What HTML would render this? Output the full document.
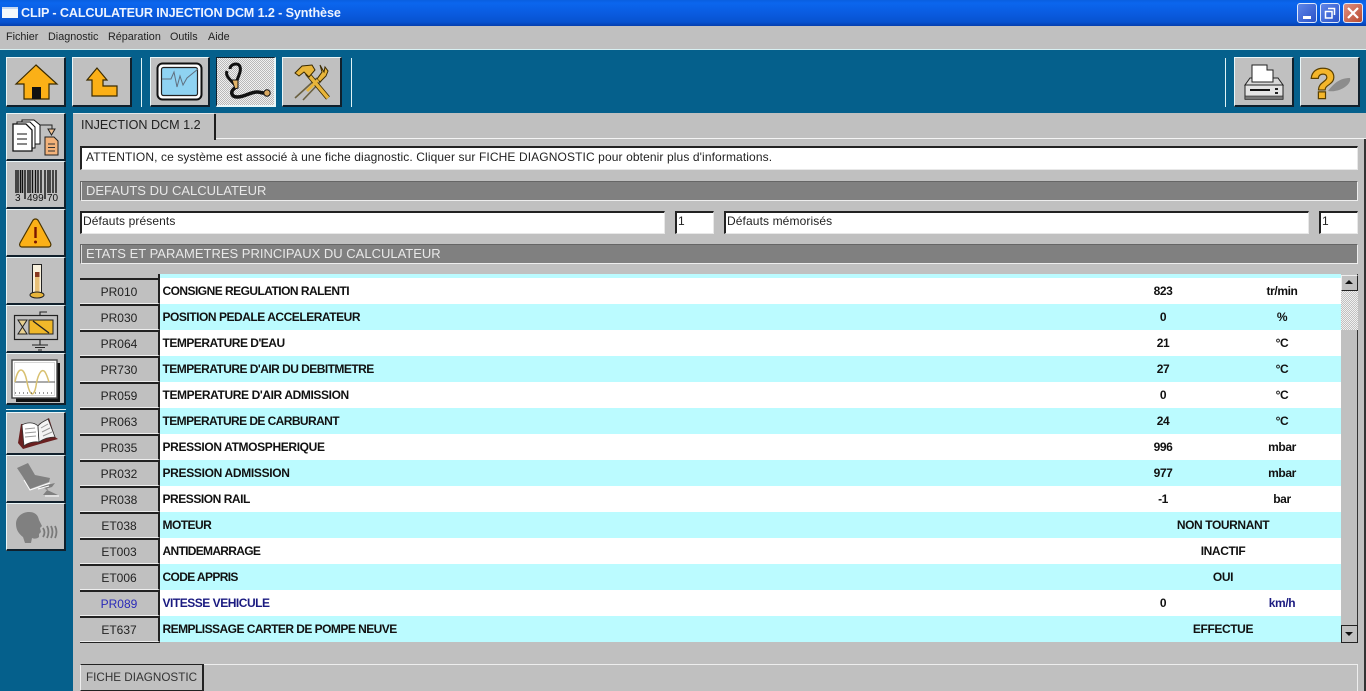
<!DOCTYPE html>
<html><head><meta charset="utf-8"><title>CLIP</title>
<style>
html,body{margin:0;padding:0;background:#05608c;overflow:hidden;width:1366px;height:691px;}
body{position:relative;font-family:"Liberation Sans",Arial,sans-serif;font-size:12px;color:#222;}
.a{position:absolute;box-sizing:border-box;}
.t{position:absolute;white-space:nowrap;}
.btn{position:absolute;box-sizing:border-box;background:#c0c0c0;border-top:1px solid #eaf6f8;border-left:1px solid #eaf6f8;border-right:2px solid #10202c;border-bottom:2px solid #10202c;}
.btn svg{position:absolute;left:0;top:0;}
.sep{position:absolute;width:1px;background:#dff3f5;top:58px;height:49px;}
.hdr{position:absolute;left:80px;width:1278px;height:20px;background:#808080;border:1px solid #666;border-right-color:#eee;border-bottom-color:#eee;box-sizing:border-box;color:#e8e8e8;font-size:13px;line-height:17px;padding-left:5px;box-shadow:inset 1px 0 0 #ddd;white-space:nowrap;}
.fld{position:absolute;background:#fff;box-sizing:border-box;border-top:2px solid #222;border-left:2px solid #222;border-right:1px solid #e8e8e8;border-bottom:1px solid #e8e8e8;height:23px;line-height:17px;font-size:12px;padding-left:1px;color:#222;letter-spacing:.11px;white-space:nowrap;}
.row{position:absolute;left:80px;width:1261px;height:26px;}
.row.c{background:#bbfbff;}.row.w{background:#fff;}
.code{position:absolute;left:0;top:0;width:80px;height:26px;background:#c0c0c0;box-sizing:border-box;border-top:2px solid #222;border-right:2px solid #222;border-bottom:1px solid #eee;text-align:center;line-height:25px;font-size:12px;color:#222;}
.name{position:absolute;left:82.5px;top:0;line-height:26px;font-weight:bold;font-size:12px;letter-spacing:-.54px;color:#111;white-space:nowrap;}
.val{position:absolute;top:0;line-height:26px;font-weight:bold;font-size:12px;letter-spacing:-.4px;text-align:center;color:#111;white-space:nowrap;}
.v1{left:1043px;width:80px;}.v2{left:1162px;width:80px;}.v3{left:1063px;width:160px;}
.blue .code,.blue .name,.blue .val{color:#1a1a80;}
.blue .code{color:#2a2ab8;}
.wb{position:absolute;top:3px;width:20px;height:20px;border-radius:3px;border:1px solid #dfe9fb;box-sizing:border-box;background:linear-gradient(135deg,#5f86e8,#2a52c8);}
</style></head><body>

<!-- Title bar -->
<div class="a" style="left:0;top:0;width:1366px;height:26px;background:linear-gradient(180deg,#0a5fe0 0,#0b66ee 12%,#0a5ce0 50%,#0752d0 85%,#063fae 100%);"></div>
<div class="a" style="left:2px;top:7px;width:16px;height:11px;background:#f4f8fc;border-top:2px solid #c8d8f0;"></div>
<div class="t" style="left:21px;top:5px;font-size:12.6px;font-weight:bold;color:#eef4ff;line-height:16px;letter-spacing:-.11px;">CLIP - CALCULATEUR INJECTION DCM 1.2 - Synthèse</div>
<div class="wb" style="left:1297px;"><div class="a" style="left:5px;top:12px;width:8px;height:3px;background:#fff;"></div></div>
<div class="wb" style="left:1320px;"><svg width="18" height="18" style="position:absolute;left:0;top:0"><path d="M7 4.500h6.500v6.500M4.500 7.500h6.500v6.500h-6.500z" fill="none" stroke="#fff" stroke-width="1.500"/></svg></div>
<div class="wb" style="left:1343px;background:linear-gradient(135deg,#e09080,#b84a30);"><svg width="18" height="18" style="position:absolute;left:0;top:0"><path d="M4 4l10 10M14 4L4 14" stroke="#fff" stroke-width="2.200"/></svg></div>

<!-- Menu bar -->
<div class="a" style="left:0;top:26px;width:1366px;height:24px;background:#c0c0c0;"></div>
<div class="a" style="left:0;top:49px;width:1366px;height:1px;background:#d8f0f2;"></div>
<div class="t" style="left:6px;top:30px;font-size:10.8px;line-height:14px;">Fichier</div>
<div class="t" style="left:48px;top:30px;font-size:10.8px;line-height:14px;">Diagnostic</div>
<div class="t" style="left:108px;top:30px;font-size:10.8px;line-height:14px;">Réparation</div>
<div class="t" style="left:170px;top:30px;font-size:10.8px;line-height:14px;">Outils</div>
<div class="t" style="left:208px;top:30px;font-size:10.8px;line-height:14px;">Aide</div>

<!-- Toolbar -->
<div class="btn" style="left:6px;top:57px;width:60px;height:50px;">
<svg width="58" height="48"><path d="M29 7L9 26H17V41H42V26H50z" fill="#fbb017" stroke="#3a2a00" stroke-width="1.200"/><rect x="25" y="29" width="9" height="12" fill="#111"/></svg></div>
<div class="btn" style="left:72px;top:57px;width:60px;height:50px;">
<svg width="58" height="48"><path d="M24 10L14 22H19V38H44V28H30V22H34z" fill="#fbb017" stroke="#3a2a00" stroke-width="1.200"/></svg></div>
<div class="sep" style="left:141px;"></div>
<div class="btn" style="left:150px;top:57px;width:60px;height:50px;">
<svg width="58" height="48"><rect x="6.500" y="5.500" width="44" height="36" rx="5" fill="#fff" stroke="#111" stroke-width="2"/><rect x="10.500" y="9.500" width="36" height="28" rx="2" fill="#8fd3f2" stroke="#222" stroke-width="1.200"/><path d="M11 21h9l3-7 3 15 3-11 3 9 4-7 11-9" fill="none" stroke="#607080" stroke-width="1"/></svg></div>
<div class="btn" style="left:216px;top:57px;width:60px;height:50px;background-color:#d4d4d4;background-image:repeating-conic-gradient(#b8b8b8 0 25%,#f0f0f0 0 50%);background-size:2px 2px;border-top-color:#10202c;border-left-color:#10202c;border-right-color:#eaf6f8;border-bottom-color:#eaf6f8;">
<svg width="58" height="48"><path d="M10 13c-2 5 3 8 7 13M13 11c0-3 3-5 6-5 4 0 5 4 4 8-1 4-3 7-4 12" fill="none" stroke="#111" stroke-width="3"/><path d="M15 22l6 0 0 8-3 1z" fill="#e3b468" stroke="#111"/><path d="M18 30c-5 3-4 9 2 9 8 0 13-5 20-5 3 0 5 1 7 1" fill="none" stroke="#111" stroke-width="3.600"/><circle cx="50" cy="35" r="3.200" fill="#d9a860" stroke="#111"/></svg></div>
<div class="btn" style="left:282px;top:57px;width:60px;height:50px;">
<svg width="58" height="48"><path d="M34 20L12 40" stroke="#6a6040" stroke-width="1.600"/><path d="M38 23L20 42" stroke="#6a6040" stroke-width="1.600"/><path d="M24 15l21 25" stroke="#3a2a00" stroke-width="5"/><path d="M24 15l21 25" stroke="#e8b53a" stroke-width="3.400"/><path d="M12 15l7-7 10-1 3 5-6 7-5-5-5 4z" fill="#e8b53a" stroke="#3a2a00"/><path d="M37 7l2 7-5 7 3 3 6-6 2-5-3-4-1 5z" fill="#e8b53a" stroke="#3a2a00"/><path d="M35 22L24 33" stroke="#e8b53a" stroke-width="3"/></svg></div>
<div class="sep" style="left:351px;"></div>
<div class="sep" style="left:1225px;"></div>
<div class="btn" style="left:1234px;top:57px;width:60px;height:50px;">
<svg width="58" height="48"><path d="M15 20h28l5 7H10z" fill="#d8d8d8" stroke="#222"/><path d="M17 7h15v5h6v12H17z" fill="#fff" stroke="#222"/><rect x="10" y="27" width="38" height="14" fill="#e4e4e4" stroke="#222"/><rect x="10" y="38" width="38" height="3.500" fill="#777" stroke="#222" stroke-width=".6"/><rect x="15" y="31" width="20" height="2" fill="#111"/><rect x="40" y="30" width="3" height="2" fill="#222"/><rect x="40" y="34" width="3" height="2" fill="#222"/></svg></div>
<div class="btn" style="left:1300px;top:57px;width:60px;height:50px;">
<svg width="58" height="48"><path d="M27 33c6-8 12-13 22-13 2 6-10 15-22 13z" fill="#8c8c8c"/><text x="9" y="40" font-family="Liberation Sans,sans-serif" font-weight="bold" font-size="42" fill="#f4b62a" stroke="#5a4000" stroke-width="2.400" style="paint-order:stroke">?</text></svg></div>

<!-- Sidebar -->
<div class="btn" style="left:6px;top:113px;width:60px;height:48px;">
<svg width="58" height="46"><path d="M15 6h12l6 5v19H15z" fill="#fff" stroke="#111"/><path d="M10 8h13l5 5v21H10z" fill="#fff" stroke="#111"/><path d="M6 10h13l6 6v21H6z" fill="#fff" stroke="#111" stroke-width="1.300"/><path d="M10 20h10M10 25h10M10 30h10" stroke="#111"/><path d="M33 11h12v4" fill="none" stroke="#222"/><path d="M41 15h7l-3.500 6z" fill="#f0c090" stroke="#222"/><path d="M38 23h9l4 4v14H38z" fill="#f2b27a" stroke="#222"/><path d="M41 30h7M41 33.500h7M41 37h7" stroke="#333"/></svg></div>
<div class="btn" style="left:6px;top:161px;width:60px;height:48px;">
<svg width="58" height="46"><path d="M9 8v23M11 8v23M13.500 8v23M15.500 8v23M18 8v29M21 8v23M23 8v23M25.500 8v23M28.500 8v23M31 8v23M34 8v23M38 8v29M41 8v23M43 8v23M46 8v23M49 8v23" stroke="#111" stroke-width="1.400"/><text font-size="10" font-family="Liberation Sans,sans-serif" fill="#111" y="39"><tspan x="8">3</tspan><tspan x="20">499</tspan><tspan x="40">70</tspan></text></svg></div>
<div class="btn" style="left:6px;top:209px;width:60px;height:48px;">
<svg width="58" height="46"><path d="M28.500 9c1.500 0 2.500 1 3 2l12 22c1 2 0 4-2 4H15c-2 0-3-2-2-4L25.500 11c.5-1 1.500-2 3-2z" fill="#fbb017" stroke="#4a3400" stroke-width="1.200"/><path d="M28.500 17v11" stroke="#7a1500" stroke-width="2.400"/><circle cx="28.500" cy="32" r="1.500" fill="#7a1500"/></svg></div>
<div class="btn" style="left:6px;top:257px;width:60px;height:48px;">
<svg width="58" height="46"><rect x="25.500" y="6.500" width="9" height="29" fill="#f8f0dc" stroke="#222"/><rect x="28" y="14" width="4.500" height="21" fill="#e8c078"/><rect x="28" y="14" width="4.500" height="5" fill="#8a3a20"/><ellipse cx="30" cy="37" rx="7" ry="3" fill="#e8b53a" stroke="#222"/></svg></div>
<div class="btn" style="left:6px;top:305px;width:60px;height:48px;">
<svg width="58" height="46"><rect x="7.500" y="9.500" width="43" height="24" fill="none" stroke="#222" stroke-width="1.200"/><path d="M11 14h9l-9 14h9z" fill="#e8d090" stroke="#222"/><rect x="22" y="14" width="24" height="14" fill="#f0b82a" stroke="#222"/><path d="M26 15l16 12" stroke="#222" stroke-width="1.400"/><path d="M33 9.500V6h7M33 33.500V39M25 39h16M28 41.500h10M31 44h4" stroke="#222" stroke-width="1.100" fill="none"/></svg></div>
<div class="btn" style="left:6px;top:353px;width:60px;height:52px;">
<svg width="58" height="50"><rect x="9" y="9" width="44" height="39" fill="#111"/><rect x="5" y="6" width="45" height="38" fill="#fff" stroke="#444" stroke-width="1.400"/><rect x="7.500" y="8.500" width="40" height="33" fill="#fff" stroke="#bbb" stroke-width=".6"/><path d="M8 28h40" stroke="#555"/><path d="M8 28c3-16 9-16 12 0 3 15 7 15 9 4 2-13 6-18 9-14 2 3 3 7 4 10" fill="none" stroke="#d8c070" stroke-width="1.500"/><path d="M8 39h40" stroke="#333" stroke-dasharray="1 3"/></svg></div>
<div class="a" style="left:6px;top:409px;width:60px;height:1px;background:#dff3f5;"></div>
<div class="btn" style="left:6px;top:412px;width:60px;height:43px;">
<svg width="58" height="41"><path d="M14 11L11 30l5 6 17-5 18-5-3-2-6-19-10 6-1 2z" fill="#6a2020"/><path d="M15 12c5-3 12-3 16 1l1 16c-5-1-12 1-15 4z" fill="#fff" stroke="#333" stroke-width=".8"/><path d="M31 13c3-4 7-5 10-7l7 18c-6 0-12 2-16 5z" fill="#f4f4f4" stroke="#333" stroke-width=".8"/><path d="M18 16l10-1M18 20l11-1M18 24l11-1M34 15l7-4M35 19l8-4M36 23l9-4" stroke="#999"/></svg></div>
<div class="btn" style="left:6px;top:455px;width:60px;height:48px;">
<svg width="58" height="46"><path d="M10 12L21 7l7 12 15 3-1 4-19 7-7-12z" fill="#808080"/><path d="M31 31l17-4-3 4-7 2 13 6H36l5-6z" fill="#808080"/><path d="M17 24l6 10 20-7M31 33l11-3M38 40h14" stroke="#fff" stroke-width="1" fill="none"/></svg></div>
<div class="btn" style="left:6px;top:503px;width:60px;height:48px;">
<svg width="58" height="46"><path d="M9 20c0-7 6-12 13-12 6 0 9 3 10 8l3 6-2 2 1 4-2 2 0 3c-2 2-5 2-7 1l-1 5H18l-2-6c-4-3-7-7-7-13z" fill="#808080"/><path d="M36 24c2 3 2 6 0 9M40 22c2 4 2 8 0 12M44 22c2 4 2 8 0 12M48 22c2 4 2 8 0 12" stroke="#7a7a7a" stroke-width="1.800" fill="none"/></svg></div>

<!-- Main panel -->
<div class="a" style="left:73px;top:113px;width:1293px;height:578px;background:#c0c0c0;"></div>
<div class="a" style="left:216px;top:138px;width:1150px;height:1px;background:#f4f4f4;"></div>
<div class="a" style="left:214px;top:114px;width:2px;height:26px;background:#1c1c1c;"></div>
<div class="a" style="left:73px;top:113px;width:141px;height:1px;background:#e8e8e8;"></div>
<div class="a" style="left:1364px;top:139px;width:2px;height:552px;background:#333;"></div>
<div class="t" style="left:81px;top:117px;font-size:12.6px;line-height:16px;color:#222;">INJECTION DCM 1.2</div>

<div class="fld" style="left:80px;top:146px;width:1278px;height:24px;line-height:19px;padding-left:4px;">ATTENTION, ce système est associé à une fiche diagnostic. Cliquer sur FICHE DIAGNOSTIC pour obtenir plus d'informations.</div>
<div class="hdr" style="top:181px;">DEFAUTS DU CALCULATEUR</div>
<div class="fld" style="left:80px;top:211px;width:585px;">Défauts présents</div>
<div class="fld" style="left:675px;top:211px;width:39px;">1</div>
<div class="fld" style="left:724px;top:211px;width:585px;">Défauts mémorisés</div>
<div class="fld" style="left:1319px;top:211px;width:39px;">1</div>
<div class="hdr" style="top:244px;">ETATS ET PARAMETRES PRINCIPAUX DU CALCULATEUR</div>

<!-- Table -->
<div class="a" style="left:160px;top:274px;width:1181px;height:5px;background:#bbfbff;"></div>
<div class="a" style="left:80px;top:274px;width:80px;height:4px;background:#c0c0c0;"></div>
<div class="a" style="left:158px;top:274px;width:2px;height:5px;background:#222;"></div>

<div class="row w" style="top:278px;"><div class="code">PR010</div><div class="name">CONSIGNE REGULATION RALENTI</div><div class="val v1">823</div><div class="val v2">tr/min</div></div>
<div class="row c" style="top:304px;"><div class="code">PR030</div><div class="name" style="letter-spacing:-.47px">POSITION PEDALE ACCELERATEUR</div><div class="val v1">0</div><div class="val v2">%</div></div>
<div class="row w" style="top:330px;"><div class="code">PR064</div><div class="name" style="letter-spacing:-.5px">TEMPERATURE D'EAU</div><div class="val v1">21</div><div class="val v2">°C</div></div>
<div class="row c" style="top:356px;"><div class="code">PR730</div><div class="name">TEMPERATURE D'AIR DU DEBITMETRE</div><div class="val v1">27</div><div class="val v2">°C</div></div>
<div class="row w" style="top:382px;"><div class="code">PR059</div><div class="name" style="letter-spacing:-.39px">TEMPERATURE D'AIR ADMISSION</div><div class="val v1">0</div><div class="val v2">°C</div></div>
<div class="row c" style="top:408px;"><div class="code">PR063</div><div class="name" style="letter-spacing:-.58px">TEMPERATURE DE CARBURANT</div><div class="val v1">24</div><div class="val v2">°C</div></div>
<div class="row w" style="top:434px;"><div class="code">PR035</div><div class="name" style="letter-spacing:-.36px">PRESSION ATMOSPHERIQUE</div><div class="val v1">996</div><div class="val v2">mbar</div></div>
<div class="row c" style="top:460px;"><div class="code">PR032</div><div class="name" style="letter-spacing:-.32px">PRESSION ADMISSION</div><div class="val v1">977</div><div class="val v2">mbar</div></div>
<div class="row w" style="top:486px;"><div class="code">PR038</div><div class="name" style="letter-spacing:-.46px">PRESSION RAIL</div><div class="val v1">-1</div><div class="val v2">bar</div></div>
<div class="row c" style="top:512px;"><div class="code">ET038</div><div class="name">MOTEUR</div><div class="val v3">NON TOURNANT</div></div>
<div class="row w" style="top:538px;"><div class="code">ET003</div><div class="name" style="letter-spacing:-.69px">ANTIDEMARRAGE</div><div class="val v3">INACTIF</div></div>
<div class="row c" style="top:564px;"><div class="code">ET006</div><div class="name" style="letter-spacing:-.63px">CODE APPRIS</div><div class="val v3">OUI</div></div>
<div class="row w blue" style="top:590px;"><div class="code">PR089</div><div class="name" style="letter-spacing:-.48px">VITESSE VEHICULE</div><div class="val v1" style="color:#111">0</div><div class="val v2">km/h</div></div>
<div class="row c" style="top:616px;"><div class="code">ET637</div><div class="name">REMPLISSAGE CARTER DE POMPE NEUVE</div><div class="val v3">EFFECTUE</div></div>
<div class="a" style="left:80px;top:642px;width:80px;height:1px;background:#222;"></div>

<!-- Scrollbar -->
<div class="a" style="left:1341px;top:274px;width:17px;height:369px;background:#c0c0c0;border-right:1px solid #333;"></div>
<div class="a" style="left:1341px;top:291px;width:17px;height:39px;background-color:#d8d8d8;background-image:repeating-conic-gradient(#c0c0c0 0 25%,#f0f0f0 0 50%);background-size:2px 2px;"></div>
<div class="a" style="left:1341px;top:275px;width:17px;height:16px;background:#c0c0c0;border-top:1px solid #eee;border-left:1px solid #eee;border-right:1px solid #222;border-bottom:1px solid #222;"></div>
<div class="a" style="left:1345px;top:280px;width:0;height:0;border-left:4px solid transparent;border-right:4px solid transparent;border-bottom:4px solid #111;"></div>
<div class="a" style="left:1341px;top:625px;width:17px;height:18px;background:#c0c0c0;border:1px solid #222;"></div>
<div class="a" style="left:1345px;top:632px;width:0;height:0;border-left:4px solid transparent;border-right:4px solid transparent;border-top:4px solid #111;"></div>

<!-- Bottom bar -->
<div class="a" style="left:80px;top:664px;width:1278px;height:27px;background:#c0c0c0;border-top:1px solid #eee;border-right:1px solid #eee;border-left:1px solid #eee;"></div>
<div class="a" style="left:80px;top:664px;width:124px;height:27px;background:#c0c0c0;border-top:1px solid #222;border-left:1px solid #eee;border-right:2px solid #222;border-bottom:1px solid #222;color:#333;font-size:11.7px;line-height:25px;padding-left:5px;white-space:nowrap;">FICHE DIAGNOSTIC</div>

</body></html>
